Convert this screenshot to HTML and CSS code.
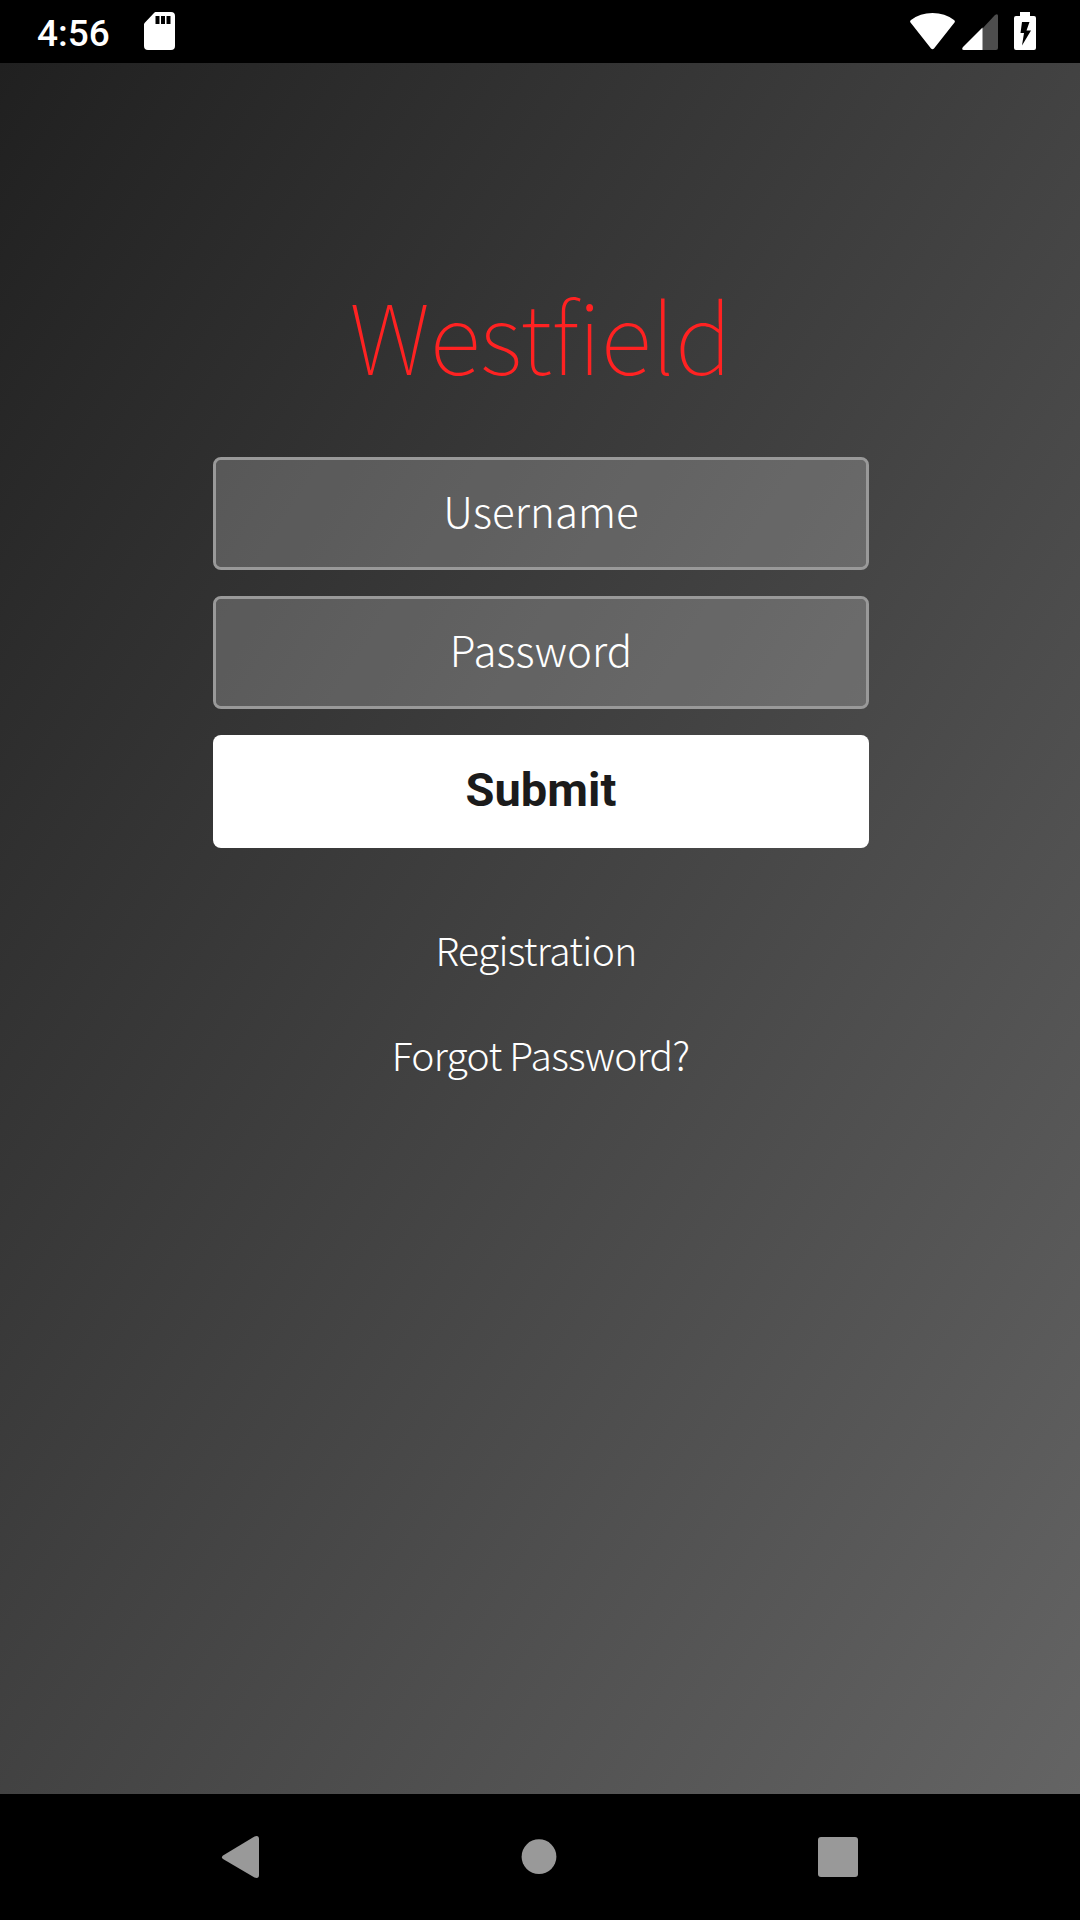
FILE: index.html
```html
<!DOCTYPE html>
<html lang="en">
<head>
<meta charset="utf-8">
<title>Westfield</title>
<link rel="stylesheet" href="styles.css">
</head>
<body>
<header class="status">
  <span class="time">4:56</span>
  <svg class="sd" viewBox="0 0 31 38"><path fill="#fff" fill-rule="evenodd" d="M11.5 0H27Q31 0 31 4V34Q31 38 27 38H4Q0 38 0 34V12.5Q0 11.5 1 10.5L10 1Q11 0 11.5 0ZM11.5 4V12H15.5V4ZM17 4V12H21V4ZM22.500 4V12H26.500V4Z"/></svg>
  <span class="spacer"></span>
  <svg class="wifi" viewBox="0 0 45 37"><path fill="#fff" d="M1 7Q10 0 22.500 0T44 7Q45.500 8 44.500 9.500L24 35.500Q22.500 37 21 35.500L.5 9.500Q-.5 8 1 7Z"/></svg>
  <svg class="cell" viewBox="0 0 36 36"><path fill="#4d4d4d" d="M20 15L33 1Q36-1 36 2V34Q36 36 34 36H20Z"/><path fill="#fff" d="M20.500 13.500V36H2Q-1 36 1 33Z"/></svg>
  <svg class="battery" viewBox="0 0 22 38"><path fill="#fff" fill-rule="evenodd" d="M6 0H16V4H20Q22 4 22 6V36Q22 38 20 38H2Q0 38 0 36V6Q0 4 2 4H6ZM8 10L6.500 21H10L8 33.500L17 18.500H12.500L15.500 10Z"/></svg>
</header>
<main class="screen">
  <h1 class="title">Westfield</h1>
  <form class="form">
    <div class="field">Username</div>
    <div class="field">Password</div>
    <div class="submit">Submit</div>
  </form>
  <a class="link register">Registration</a>
  <a class="link">Forgot Password?</a>
</main>
<nav class="nav">
  <svg viewBox="0 0 48 48"><path fill="#999" d="M7 22.500L38.500 3.500Q43 2 43 6V42Q43 46 38.500 44.500L7 26Q5 24 7 22.500Z"/></svg>
  <svg viewBox="0 0 48 48"><circle cx="24" cy="23.700" r="17.400" fill="#999"/></svg>
  <svg viewBox="0 0 48 48"><rect x="4" y="4" width="40" height="40" rx="3" fill="#999"/></svg>
</nav>
</body>
</html>
```
FILE: styles.css
```css
body { margin: 0; width: 1080px; height: 1920px; display: flex; flex-direction: column; background: #000; overflow: hidden; }
.status { height: 63px; display: flex; box-sizing: border-box; padding: 12px 44px 0 37px; color: #fff; align-items: flex-start; }
.time { font: 500 37px/44px Roboto, sans-serif; }
.sd { width: 31px; height: 38px; margin-left: 34px; }
.spacer { flex: 1; }
.wifi { width: 45px; height: 37px; margin-top: 1px; }
.cell { width: 36px; height: 36px; margin: 2px 16px 0 7px; }
.battery { width: 22px; height: 38px; }
.screen { height: 1731px; display: flex; flex-direction: column; align-items: center; background: linear-gradient(to bottom right, #202020, #646464); color: #fff; font-family: "Noto Sans CJK JP", "Noto Sans", sans-serif; font-weight: 300; }
.title { margin: 193px 0 0; height: 201px; line-height: 156px; padding-left: 1px; font-size: 96px; font-weight: 100; letter-spacing: -.4px; color: #f22; }
.form { width: 656px; margin-left: 2px; display: flex; flex-direction: column; gap: 26px; }
.field, .submit { box-sizing: border-box; height: 113px; border-radius: 8px; text-align: center; }
.field { border: 3px solid #999; background: rgba(255,255,255,.2); background-clip: padding-box; font-size: 42px; letter-spacing: .1px; line-height: 99px; }
.submit { background: #fff; color: #1b1b1b; font: 700 47px/110px Roboto, sans-serif; }
.link { font-size: 39px; line-height: 60px; margin-top: 45px; padding-left: 1px; letter-spacing: -.7px; }
.register { margin-top: 71px; padding-right: 9px; }
.nav { height: 126px; display: flex; justify-content: center; align-items: center; gap: 251px; padding-right: 2px; }
.nav svg { width: 48px; height: 48px; }
```
